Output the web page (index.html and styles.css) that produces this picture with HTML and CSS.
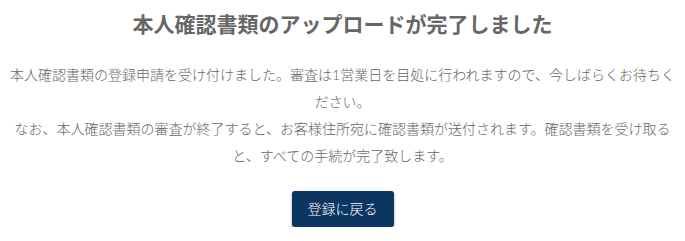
FILE: index.html
```html
<!DOCTYPE html>
<html lang="ja">
<head>
    <meta charset="UTF-8">
    <meta name="viewport" content="width=device-width, initial-scale=1.0">
    <title>本人確認書類のアップロード完了</title>
    <link rel="stylesheet" href="styles.css">
</head>
<body>

<div class="complete">
    <h2 class="complete-title">本人確認書類のアップロードが完了しました</h2>
    <p class="complete-text">
        本人確認書類の登録申請を受け付けました。審査は1営業日を目処に行われますので、今しばらくお待ちください。<br>
        なお、本人確認書類の審査が終了すると、お客様住所宛に確認書類が送付されます。確認書類を受け取ると、すべての手続が完了致します。
    </p>
    <div class="complete-actions">
        <a class="btn-primary" href="#">登録に戻る</a>
    </div>
</div>

</body>
</html>
```

FILE: styles.css
```css
body {
    margin: 8px;
    font-family: Lato, "Noto Sans CJK JP", sans-serif;
    font-weight: 300;
    color: #666;
    background: #fff;
}
.complete {
    text-align: center;
}
.complete-title {
    margin: 0 0 22px;
    font-size: 21px;
    line-height: 31px;
    font-weight: 700;
    color: #666;
}
.complete-text {
    margin: 0 0 22px;
    font-size: 14px;
    line-height: 27px;
}
.complete-actions {
    display: flex;
    justify-content: center;
}
.btn-primary {
    display: inline-block;
    padding: 0 16px;
    height: 36px;
    line-height: 36px;
    font-size: 14px;
    color: #fff;
    background: #0d3561;
    border-radius: 3px;
    text-decoration: none;
    box-shadow: 0 1px 3px rgba(0, 0, 0, 0.35);
}
```
